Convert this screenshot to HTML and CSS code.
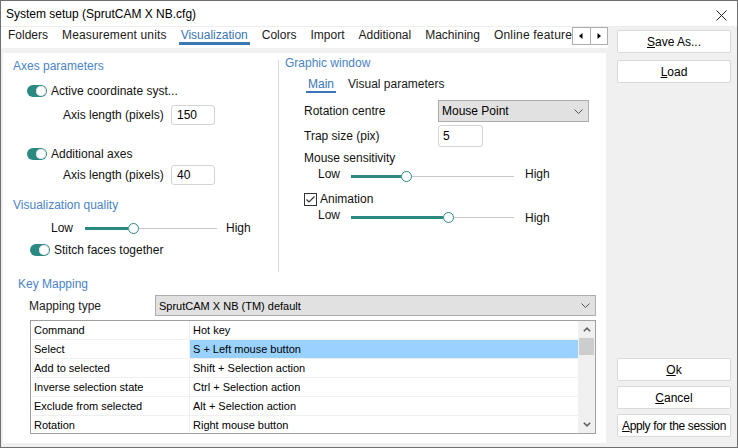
FILE: index.html
```html
<!DOCTYPE html>
<html>
<head>
<meta charset="utf-8">
<title>System setup</title>
<link rel="stylesheet" href="styles.css">
</head>
<body>
<div class="window">
  <div class="titlebar">
    <span class="title">System setup (SprutCAM X NB.cfg)</span>
    <svg class="close" width="11" height="11" viewBox="0 0 11 11"><path d="M0.5 0.5L10.5 10.5M10.5 0.5L0.5 10.5" stroke="#1a1a1a" stroke-width="1"/></svg>
  </div>
  <div class="main">
    <div class="left">
      <div class="tabs">
        <div class="tablist">
          <div class="tab"><span>Folders</span></div>
          <div class="tab"><span>Measurement units</span></div>
          <div class="tab active"><span>Visualization</span></div>
          <div class="tab"><span>Colors</span></div>
          <div class="tab"><span>Import</span></div>
          <div class="tab"><span>Additional</span></div>
          <div class="tab"><span>Machining</span></div>
          <div class="tab"><span>Online features</span></div>
        </div>
        <div class="tabarrows">
          <div class="tabarrow"><svg width="4" height="6" viewBox="0 0 4 6"><polygon points="3.5,0 0,3 3.5,6" fill="#000"/></svg></div>
          <div class="tabarrow"><svg width="4" height="6" viewBox="0 0 4 6"><polygon points="0.5,0 4,3 0.5,6" fill="#000"/></svg></div>
        </div>
      </div>
      <div class="panel">
        <div class="upper">
          <div class="colleft">
            <div class="gtitle">Axes parameters</div>
            <div class="trow trow-first"><span class="toggle"></span><span>Active coordinate syst...</span></div>
            <div class="field-row fr-first"><label>Axis length (pixels)</label><div class="num">150</div></div>
            <div class="trow trow-second"><span class="toggle"></span><span>Additional axes</span></div>
            <div class="field-row fr-second"><label>Axis length (pixels)</label><div class="num">40</div></div>
            <div class="gtitle gt-quality">Visualization quality</div>
            <div class="srow srow-quality">
              <span class="sl-low">Low</span>
              <div class="slider"><div class="fill" style="width:43px"></div><div class="thumb"></div><div class="rest"></div></div>
              <span class="sl-high">High</span>
            </div>
            <div class="trow trow-stitch"><span class="toggle"></span><span>Stitch faces together</span></div>
          </div>
          <div class="vsep"></div>
          <div class="colright">
            <div class="gtitle gt-graphic">Graphic window</div>
            <div class="subtabs">
              <span class="subtab active">Main</span>
              <span class="subtab">Visual parameters</span>
            </div>
            <div class="frow frow-rot">
              <label>Rotation centre</label>
              <div class="select sel-rot"><span>Mouse Point</span><svg width="9" height="5" viewBox="0 0 9 5"><path d="M0.5 0.5L4.5 4.5L8.5 0.5" fill="none" stroke="#555" stroke-width="1"/></svg></div>
            </div>
            <div class="frow frow-trap">
              <label>Trap size (pix)</label>
              <div class="num num-trap">5</div>
            </div>
            <div class="plain-label">Mouse sensitivity</div>
            <div class="srow srow-right srow-mouse">
              <span class="sl-low">Low</span>
              <div class="slider"><div class="fill" style="width:50px"></div><div class="thumb"></div><div class="rest"></div></div>
              <span class="sl-high">High</span>
            </div>
            <div class="crow">
              <svg class="check" width="13" height="13" viewBox="0 0 13 13"><rect x="0.5" y="0.5" width="12" height="12" fill="#fff" stroke="#333"/><path d="M2.5 6.5L5 9L10.5 3.5" fill="none" stroke="#333" stroke-width="1.2"/></svg>
              <span>Animation</span>
            </div>
            <div class="srow srow-right srow-anim">
              <span class="sl-low">Low</span>
              <div class="slider"><div class="fill" style="width:92px"></div><div class="thumb"></div><div class="rest"></div></div>
              <span class="sl-high">High</span>
            </div>
          </div>
        </div>
        <div class="keymap">
          <div class="gtitle km-title">Key Mapping</div>
          <div class="mrow">
            <label>Mapping type</label>
            <div class="select sel-map"><span>SprutCAM X NB (TM) default</span><svg width="9" height="5" viewBox="0 0 9 5"><path d="M0.5 0.5L4.5 4.5L8.5 0.5" fill="none" stroke="#555" stroke-width="1"/></svg></div>
          </div>
          <div class="table">
            <div class="rows">
              <div class="row"><div class="cell">Command</div><div class="cell">Hot key</div></div>
              <div class="row"><div class="cell">Select</div><div class="cell hl">S + Left mouse button</div></div>
              <div class="row"><div class="cell">Add to selected</div><div class="cell">Shift + Selection action</div></div>
              <div class="row"><div class="cell">Inverse selection state</div><div class="cell">Ctrl + Selection action</div></div>
              <div class="row"><div class="cell">Exclude from selected</div><div class="cell">Alt + Selection action</div></div>
              <div class="row"><div class="cell">Rotation</div><div class="cell">Right mouse button</div></div>
            </div>
            <div class="vscroll">
              <div class="sarrow"><svg width="8" height="5" viewBox="0 0 8 5"><path d="M0.8 4.3L4 1.2L7.2 4.3" fill="none" stroke="#606060" stroke-width="1.6"/></svg></div>
              <div class="sthumb"></div>
              <div class="sarrow sarrow-down"><svg width="8" height="5" viewBox="0 0 8 5"><path d="M0.8 0.7L4 3.8L7.2 0.7" fill="none" stroke="#606060" stroke-width="1.6"/></svg></div>
            </div>
          </div>
        </div>
      </div>
    </div>
    <div class="side">
      <div class="btn"><span><u>S</u>ave As...</span></div>
      <div class="btn"><span><u>L</u>oad</span></div>
      <div class="btn btn-ok"><span><u>O</u>k</span></div>
      <div class="btn btn-low"><span><u>C</u>ancel</span></div>
      <div class="btn btn-low btn-apply"><span><u>A</u>pply for the session</span></div>
    </div>
  </div>
</div>
</body>
</html>
```

FILE: styles.css
```css
* { box-sizing: border-box; }
html, body { margin: 0; padding: 0; }
body {
  width: 738px;
  height: 448px;
  overflow: hidden;
  font-family: "Liberation Sans", Arial, sans-serif;
  font-size: 12px;
  color: #111;
  background: #f0f0f0;
}
.window {
  width: 738px;
  height: 448px;
  border: 1px solid #707070;
  display: flex;
  flex-direction: column;
  background: #f0f0f0;
}
.titlebar {
  height: 26px;
  flex: none;
  background: #fff;
  border-bottom: 1px solid #ededed;
  display: flex;
  align-items: center;
  justify-content: space-between;
  padding: 1px 10px 0 5px;
  color: #000;
}
.close { margin-top: 2px; }
.main { flex: 1; display: flex; min-height: 0; }
.left { width: 607px; flex: none; display: flex; flex-direction: column; }

/* tabs */
.tabs { height: 21px; flex: none; background: #fff; display: flex; }
.tablist { flex: 1; min-width: 0; display: flex; overflow: hidden; white-space: nowrap; }
.tab { flex: none; padding: 1px 7px 0; color: #1a1a1a; }
.tab:nth-child(2) { letter-spacing: 0.15px; }
.tab:last-child { letter-spacing: 0.2px; }
.tab span {
  display: block;
  line-height: 14px;
  padding: 0 2px;
  margin: 0 -2px;
  border-bottom: 3px solid transparent;
}
.tab.active span { color: #3a76b6; border-bottom-color: #3b77b3; }
.tabarrows {
  width: 36px;
  height: 18px;
  flex: none;
  display: flex;
  border: 1px solid #adadad;
  background: #fff;
}
.tabarrow { flex: 1; display: flex; align-items: center; justify-content: center; }
.tabarrow + .tabarrow { border-left: 1px solid #adadad; }

/* panel */
.panel {
  flex: 1;
  margin: 5px 2px 4px 2px;
  background: #fff;
  display: flex;
  flex-direction: column;
}
.upper { height: 219px; flex: none; display: flex; }
.colleft { width: 275px; flex: none; padding-top: 6px; }
.vsep { width: 1px; flex: none; background: #dadada; margin-top: 7px; }
.colright { flex: 1; padding-top: 3px; }

.gtitle { color: #4a83c6; line-height: 14px; padding-left: 10px; }
.gt-quality { margin-top: 13px; }
.gt-graphic { padding-left: 6px; }

.trow { display: flex; align-items: center; line-height: 14px; padding-left: 24px; }
.trow-first { margin-top: 11px; }
.trow-second { margin-top: 22px; }
.trow-stitch { margin-top: 8px; padding-left: 27px; }
.toggle {
  width: 20px;
  height: 12px;
  border-radius: 6px;
  background: #2a8a82;
  display: flex;
  justify-content: flex-end;
  align-items: center;
  padding: 1px;
  margin-right: 4px;
  flex: none;
}
.toggle::after {
  content: "";
  width: 10px;
  height: 10px;
  border-radius: 50%;
  background: #fff;
  box-shadow: inset 0 0 0 1px #e2e2e2;
}

.field-row { display: flex; align-items: center; padding-left: 60px; }
.field-row label { width: 108px; flex: none; }
.fr-first { margin-top: 7px; }
.fr-second { margin-top: 4px; }
.num {
  width: 44px;
  height: 20px;
  border: 1px solid #d4d4d4;
  border-radius: 3px;
  padding-left: 5px;
  line-height: 18px;
  color: #000;
}

/* sliders */
.srow { display: flex; align-items: center; line-height: 14px; }
.srow-quality { margin-top: 9px; padding-left: 48px; }
.srow-quality .sl-low { width: 34px; }
.srow-quality .slider { width: 132px; }
.srow-quality .sl-high { margin-left: 9px; }
.slider { display: flex; align-items: center; height: 11px; flex: none; }
.fill { height: 3px; background: #2a8a82; flex: none; }
.thumb {
  width: 11px;
  height: 11px;
  border-radius: 50%;
  border: 1.5px solid #2a8a82;
  background: #fff;
  flex: none;
}
.rest { flex: 1; height: 1px; background: #c8c8c8; }
.sl-low { flex: none; }

.srow-right { align-items: flex-start; padding-left: 39px; }
.srow-right .sl-low { width: 33px; }
.srow-right .slider { width: 163px; margin-top: 4px; }
.srow-right .sl-high { margin-left: 11px; }
.srow-mouse { margin-top: 2px; }
.srow-anim { margin-top: 2px; }
.srow-anim .sl-high { margin-top: 3px; }

/* graphic window */
.subtabs { display: flex; margin-top: 7px; padding-left: 27px; }
.subtab {
  line-height: 14px;
  padding: 0 2px;
  border-bottom: 2px solid transparent;
  color: #1a1a1a;
}
.subtab + .subtab { margin-left: 10px; }
.subtab.active { color: #3a76b6; border-bottom-color: #3b77b3; }
.frow { display: flex; align-items: center; padding-left: 25px; }
.frow label { width: 134px; flex: none; }
.frow-rot { margin-top: 7px; }
.frow-trap { margin-top: 3px; }
.num-trap { width: 45px; height: 22px; line-height: 20px; padding-left: 4px; }
.select {
  display: flex;
  align-items: center;
  justify-content: space-between;
  background: #e1e1e1;
  border: 1px solid #adadad;
  padding: 0 5px 0 3px;
  color: #000;
}
.sel-rot { width: 151px; height: 22px; }
.plain-label { padding-left: 25px; margin-top: 4px; line-height: 14px; }
.crow { display: flex; align-items: center; padding-left: 25px; margin-top: 10px; line-height: 14px; }
.check { margin-right: 3px; flex: none; }

/* key mapping */
.keymap { padding-top: 5px; }
.km-title { padding-left: 15px; }
.mrow { display: flex; align-items: center; margin-top: 4px; padding-left: 26px; }
.mrow label { width: 126px; flex: none; color: #222; }
.sel-map { width: 441px; height: 21px; font-size: 11px; }
.table {
  margin: 4px 0 0 27px;
  width: 566px;
  height: 114px;
  border: 1px solid #a0a0a0;
  display: flex;
  font-size: 11px;
  color: #000;
}
.rows { flex: 1; overflow: hidden; }
.row {
  display: grid;
  grid-template-columns: 159px 1fr;
  height: 19px;
  border-bottom: 1px solid #f0f0f0;
}
.cell { padding-left: 3px; line-height: 18px; white-space: nowrap; }
.cell:first-child { border-right: 1px solid #f0f0f0; }
.cell.hl { background: #99d1ff; }
.vscroll {
  width: 17px;
  flex: none;
  background: #f0f0f0;
  display: flex;
  flex-direction: column;
  align-items: center;
}
.sarrow { height: 17px; width: 17px; display: flex; align-items: center; justify-content: center; }
.sthumb { width: 15px; height: 17px; background: #cdcdcd; }
.sarrow-down { margin-top: auto; }

/* side buttons */
.side {
  flex: 1;
  display: flex;
  flex-direction: column;
  padding: 3px 6px 10px 9px;
}
.btn {
  height: 23px;
  flex: none;
  background: #fff;
  border: 1px solid #d9d9d9;
  border-radius: 2px;
  display: flex;
  align-items: center;
  justify-content: center;
  white-space: nowrap;
  color: #000;
}
.btn + .btn { margin-top: 7px; }
.btn.btn-ok { margin-top: auto; }
.btn.btn-low { margin-top: 5px; }
.btn-apply { letter-spacing: -0.35px; }
```
